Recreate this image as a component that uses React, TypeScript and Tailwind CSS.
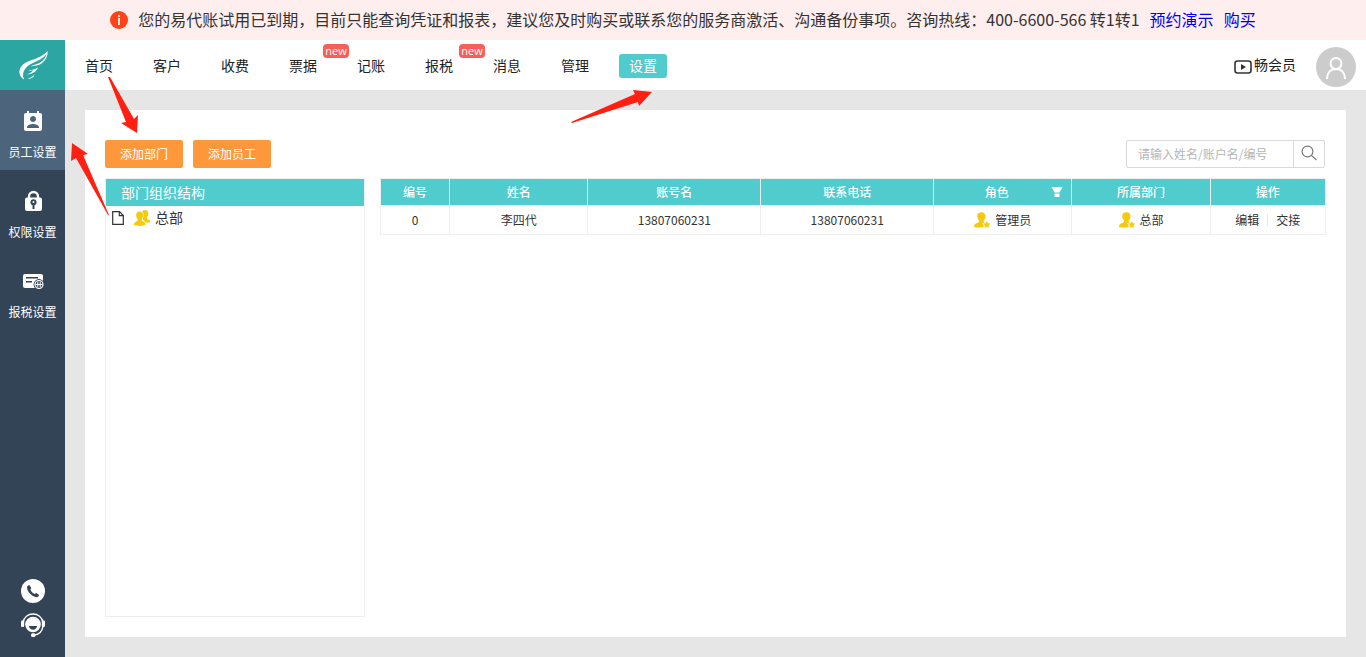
import { MdPermContactCalendar } from "react-icons/md";

const navItems = [
  { label: "首页" },
  { label: "客户" },
  { label: "收费" },
  { label: "票据", isNew: true },
  { label: "记账" },
  { label: "报税", isNew: true },
  { label: "消息" },
  { label: "管理" },
  { label: "设置", active: true },
];

const sideItems = [
  { label: "员工设置", icon: StaffIcon, active: true },
  { label: "权限设置", icon: LockIcon },
  { label: "报税设置", icon: TaxIcon },
];

const employees = [
  {
    id: 0,
    name: "李四代",
    account: "13807060231",
    phone: "13807060231",
    role: "管理员",
    department: "总部",
  },
];

function StaffIcon() {
  return <MdPermContactCalendar className="h-6 w-6" />;
}

function LockIcon() {
  return (
    <svg className="h-6 w-6" viewBox="0 0 24 24" fill="none">
      <path d="M8 9V6.5a4.500 4.500 0 0 1 9 0V9" stroke="currentColor" strokeWidth="2.400" />
      <rect x="4" y="7.500" width="17" height="13.500" rx="2" fill="currentColor" />
      <circle cx="12.500" cy="12.300" r="3" fill="#324456" />
      <path d="M12.500 12.500v6.500" stroke="#324456" strokeWidth="2" />
      <circle cx="12.500" cy="12" r="1" fill="currentColor" />
    </svg>
  );
}

function TaxIcon() {
  return (
    <svg className="h-6 w-6" viewBox="0 0 24 24" fill="none">
      <rect x="2" y="4" width="20" height="14" rx="2" fill="currentColor" />
      <path d="M5 7.7h12M5 11.7h6" stroke="#324456" strokeWidth="1.5" />
      <circle cx="18" cy="14.5" r="5.4" fill="#324456" />
      <circle cx="18" cy="14.5" r="4" stroke="currentColor" strokeWidth="1.2" />
      <path d="M14.5 14.5h7M16.8 11.5v6M19.2 11.5v6" stroke="currentColor" strokeWidth="1" />
    </svg>
  );
}

function LogoIcon() {
  return (
    <svg className="h-8 w-8" viewBox="0 0 32 32" fill="#fff">
      <path d="M7.200 30.500C1.500 27.500 .500 20.500 6 15.500C12 10.500 25 9.500 30.500 2C31 7 28.500 11.500 25 14.200C21.500 16.500 17.500 16.800 13.500 17.300C18.500 15.300 23.500 14.500 26.500 10.800C28 9 29 7.500 29.200 5.500C24 12 15 13 10 17.700C6 21.500 5 26 7.200 30.500Z" />
      <path d="M20.800 18.500C20 22.500 16 24.500 9.800 25.700C13.500 24 15 23 16.300 21.300C14.500 21.700 13 21.800 11.200 21.600C15.500 21 18 20.300 20.800 18.500Z" />
      <path d="M17.500 25.500C16.500 29 13.500 30 10.500 29.600C13.500 28.700 15.500 27.800 17.500 25.500Z" />
    </svg>
  );
}

function PhoneIcon() {
  return (
    <svg className="h-6 w-6" viewBox="0 0 24 24">
      <circle cx="12" cy="12" r="12" fill="#fff" />
      <path
        d="M8.300 6L6.500 7C5.300 9 6.800 12.500 9.400 15.100C12.100 17.700 15.500 19 17.300 17.600L18.200 16L15.100 14L13.500 15C12 14.300 10 12.200 9.400 10.700L10.300 9.100Z"
        fill="#324456"
      />
    </svg>
  );
}

function ServiceIcon() {
  return (
    <svg className="h-6 w-6" viewBox="0 0 24 24" fill="none">
      <path d="M2 9.500C3 4.300 7 1 12 1S21 4.300 22 9.500" stroke="#fff" strokeWidth="1.500" />
      <rect y="7.500" width="3.200" height="6.500" rx="1.200" fill="#fff" />
      <rect x="20.800" y="7.500" width="3.200" height="6.500" rx="1.200" fill="#fff" />
      <circle cx="12" cy="11.500" r="7.800" fill="#fff" />
      <path d="M8 13h8c-.3 2.600-2 3.800-4 3.800S8.300 15.600 8 13Z" fill="#324456" />
      <path d="M22 13C21.300 18.500 17.500 21.800 12.500 22" stroke="#fff" strokeWidth="1.500" />
      <rect x="10" y="20.200" width="4.500" height="3.800" rx="1.500" fill="#fff" />
    </svg>
  );
}

function InfoIcon() {
  return (
    <svg className="h-[18px] w-[18px]" viewBox="0 0 18 18">
      <circle cx="9" cy="9" r="9" fill="#ff4218" />
      <rect x="8" y="4" width="2" height="2" fill="#ffe5df" />
      <rect x="8" y="7" width="2" height="7" fill="#ffe5df" />
    </svg>
  );
}

function VideoIcon() {
  return (
    <svg className="h-[14px] w-[18px]" viewBox="0 0 18 14">
      <rect x="1" y="1" width="16" height="12" rx="2.500" fill="none" stroke="#333" strokeWidth="1.600" />
      <path d="M7 4l5 3-5 3z" fill="#333" />
    </svg>
  );
}

function AvatarIcon() {
  return (
    <svg className="h-10 w-10" viewBox="0 0 40 40" fill="none">
      <circle cx="20" cy="20" r="20" fill="#ccc" />
      <circle cx="20" cy="16.500" r="5.500" stroke="#fff" strokeWidth="2" />
      <path d="M11 32c0-6 3.500-10 9-10s9 4 9 10" stroke="#fff" strokeWidth="2" />
    </svg>
  );
}

function FileIcon() {
  return (
    <svg className="h-[14px] w-3" viewBox="0 0 12 14" fill="none" stroke="#333" strokeWidth="1.200">
      <path d="M.700 .700H7.500L11.300 4.500V13.300H.700Z" />
      <path d="M7.300 .700V4.700H11.300" />
    </svg>
  );
}

function GroupIcon() {
  return (
    <svg className="h-4 w-4" viewBox="0 0 16 16" fill="#f6ca0c">
      <path d="M10.800 0c2.200 0 3.500 1.500 3.500 3.500 0 1.600-.6 2.900-1.400 3.700-.2 1.400.2 1.800 1.400 2.300 1.200.5 1.700 1.200 1.700 2.900h-4.500L8.500 9V.800C9.100.300 9.900 0 10.800 0z" />
      <path
        d="M5.600 1.400c2.200 0 3.500 1.600 3.500 3.900 0 1.500-.6 2.900-1.400 3.700-.2 1.500.2 1.900 1.500 2.400 1.500.6 2.300 1.400 2.300 3.700-2.100 1.100-9.400 1.100-11.500 0 0-2.300.8-3.100 2.300-3.700 1.200-.5 1.500-.9 1.300-2.400-.9-.8-1.500-2.200-1.500-3.700 0-2.300 1.300-3.900 3.500-3.900z"
        stroke="#fff"
        strokeWidth="1"
        paintOrder="stroke"
      />
    </svg>
  );
}

function MemberIcon() {
  return (
    <svg className="h-4 w-4" viewBox="0 0 16 16" fill="#f6ca0c">
      <path d="M7.300 .300c2.600 0 4.200 1.600 4.200 4.100 0 1.700-.7 3.200-1.700 4.100-.2 1 0 1.700.7 2L9 11l-1 .6 1.700 1.700-.3 2C6 15.700 2 15.600 0 15c0-2.300 1-3.100 2.500-3.700 1.900-.7 2.700-1.100 2.500-2.900-1-.9-1.800-2.400-1.800-4.100 0-2.400 1.600-4 4.100-4z" />
      <path d="M12.700 9l1.100 2.300 2.500.3-1.800 1.700.4 2.600-2.200-1.200-2.200 1.200.4-2.600-1.800-1.700 2.500-.3z" />
    </svg>
  );
}

function FilterIcon() {
  return (
    <svg className="h-3 w-3" viewBox="0 0 12 12" fill="#fff">
      <path d="M.500 1h11L8.500 6.500h-5z" />
      <path d="M3.500 7.500h5v3.500h-5z" />
    </svg>
  );
}

function SearchIcon() {
  return (
    <svg className="h-4 w-4" viewBox="0 0 16 16" fill="none" stroke="#777" strokeWidth="1.200">
      <circle cx="6.500" cy="6.500" r="5.400" />
      <path d="M10.400 10.400L15.500 15" />
    </svg>
  );
}

// red pointers of the guided tour, drawn over the whole page
function GuideArrows() {
  return (
    <svg
      className="pointer-events-none absolute left-0 top-0 h-[240px] w-[680px]"
      viewBox="0 0 680 240"
      fill="#ff2011"
    >
      <path d="M108 77H110L134 119L138 115L137 133L121 123L126 122Z" />
      <path d="M72 143L88 154L83 155L109 215H108L76 158L71 161Z" />
      <path d="M571 122L635 94L633 90L652 92L639 106L638 102L572 123Z" />
    </svg>
  );
}

export default function App() {
  return (
    <div className="relative flex min-h-screen flex-col bg-[#e6e6e6] font-['Noto_Sans_CJK_SC',sans-serif] text-xs text-[#333]">
      {/* Trial notice */}
      <div className="flex h-10 items-center justify-center bg-[#ffeeee] text-base leading-6">
        <InfoIcon />
        <p className="mb-0.5 ml-2.5 flex gap-2.5">
          <span>
            您的易代账试用已到期，目前只能查询凭证和报表，建议您及时购买或联系您的服务商激活、沟通备份事项。咨询热线：400-6600-566 转1转1
          </span>
          <a href="#" className="text-[#0000ee]">预约演示</a>
          <a href="#" className="text-[#0000ee]">购买</a>
        </p>
      </div>

      <div className="flex flex-1">
        {/* Sidebar */}
        <aside className="flex w-[65px] shrink-0 flex-col bg-[#324456] text-white">
          <a href="#" aria-label="易代账" className="flex h-[50px] items-center justify-center bg-[#2ba6a3]">
            <LogoIcon />
          </a>
          {sideItems.map((item) => {
            const Icon = item.icon;
            return (
              <a
                key={item.label}
                href="#"
                className={`flex h-20 flex-col items-center pt-5 leading-5 ${item.active ? "bg-[#4c657d]" : ""}`}
              >
                <Icon />
                <span className="mt-2">{item.label}</span>
              </a>
            );
          })}
          <div className="mt-auto flex flex-col items-center gap-2.5 pb-5">
            <button aria-label="电话"><PhoneIcon /></button>
            <button aria-label="客服"><ServiceIcon /></button>
          </div>
        </aside>

        <div className="flex min-w-0 flex-1 flex-col">
          {/* Top nav */}
          <header className="flex h-[50px] items-center justify-between bg-white px-2.5 text-sm text-[#222]">
            <nav className="flex gap-5">
              {navItems.map((item) => (
                <a
                  key={item.label}
                  href="#"
                  className={`relative mt-0.5 h-6 rounded-[3px] px-2.5 leading-[22px] ${item.active ? "bg-[#50cbce] text-white" : ""}`}
                >
                  {item.label}
                  {item.isNew && (
                    <span className="absolute -top-2.5 left-11 h-[14px] w-[26px] rounded-sm bg-[#f85f5a] text-center font-['Open_Sans',sans-serif] text-[11px] font-medium leading-[14px] text-white">
                      new
                    </span>
                  )}
                </a>
              ))}
            </nav>
            <div className="flex items-center">
              <span className="mt-1"><VideoIcon /></span>
              <a href="#" className="mb-0.5 ml-0.5">畅会员</a>
              <button aria-label="用户" className="ml-5 mt-1"><AvatarIcon /></button>
            </div>
          </header>

          {/* Content */}
          <main className="m-5 flex flex-1 flex-col bg-white px-5 pb-5 pt-[30px]">
            <div className="flex items-center justify-between">
              <div className="flex gap-2.5">
                <button className="h-7 rounded-xs bg-[#ff983b] px-[15px] text-white">添加部门</button>
                <button className="h-7 rounded-xs bg-[#ff983b] px-[15px] text-white">添加员工</button>
              </div>
              <form className="mr-px flex h-7 w-[199px] rounded-xs border border-[#d9d9d9]">
                <input
                  type="text"
                  aria-label="搜索员工"
                  placeholder="请输入姓名/账户名/编号"
                  className="min-w-0 flex-1 pl-[11px] outline-none placeholder:text-[#b5b5b5]"
                />
                <button
                  type="button"
                  aria-label="搜索"
                  className="flex w-[31px] items-center justify-center border-l border-[#d9d9d9] pb-0.5"
                >
                  <SearchIcon />
                </button>
              </form>
            </div>

            <div className="mt-2.5 flex flex-1 gap-[15px]">
              <section className="w-[260px] shrink-0 border border-[#eee] text-sm">
                <h2 className="h-[27px] bg-[#50cbce] pl-[15px] leading-[27px] text-white">部门组织结构</h2>
                <div className="flex h-6 items-center pl-1.5">
                  <FileIcon />
                  <span className="ml-2.5"><GroupIcon /></span>
                  <a href="#" className="mb-0.5 ml-[5px]">总部</a>
                </div>
              </section>

              <div className="min-w-0 flex-1">
                <table className="w-full table-fixed border-collapse text-center leading-[18px]">
                  <thead className="bg-[#50cbce] text-white">
                    <tr className="h-[27px]">
                      <th className="w-[60px] border border-[#eee] font-medium">编号</th>
                      <th className="w-[120px] border border-[#eee] font-medium">姓名</th>
                      <th className="w-[150px] border border-[#eee] font-medium">账号名</th>
                      <th className="w-[150px] border border-[#eee] font-medium">联系电话</th>
                      <th className="w-[120px] border border-[#eee] font-medium">
                        <div className="relative pr-3">
                          角色
                          <button aria-label="筛选角色" className="absolute right-2 top-[3px]">
                            <FilterIcon />
                          </button>
                        </div>
                      </th>
                      <th className="w-[120px] border border-[#eee] font-medium">所属部门</th>
                      <th className="w-[100px] border border-[#eee] font-medium">操作</th>
                    </tr>
                  </thead>
                  <tbody>
                    {employees.map((employee) => (
                      <tr key={employee.id} className="h-[29px]">
                        <td className="border border-[#eee]">{employee.id}</td>
                        <td className="border border-[#eee]">{employee.name}</td>
                        <td className="border border-[#eee]">{employee.account}</td>
                        <td className="border border-[#eee]">{employee.phone}</td>
                        <td className="border border-[#eee]">
                          <div className="flex items-center justify-center gap-[5px]">
                            <MemberIcon />
                            {employee.role}
                          </div>
                        </td>
                        <td className="border border-[#eee]">
                          <div className="flex items-center justify-center gap-[5px]">
                            <MemberIcon />
                            {employee.department}
                          </div>
                        </td>
                        <td className="border border-[#eee]">
                          <div className="flex items-center justify-center gap-2">
                            <a href="#">编辑</a>
                            <span className="h-3 w-px bg-[#e8e8e8]" />
                            <a href="#">交接</a>
                          </div>
                        </td>
                      </tr>
                    ))}
                  </tbody>
                </table>
              </div>
            </div>
          </main>
        </div>
      </div>

      <GuideArrows />
    </div>
  );
}
